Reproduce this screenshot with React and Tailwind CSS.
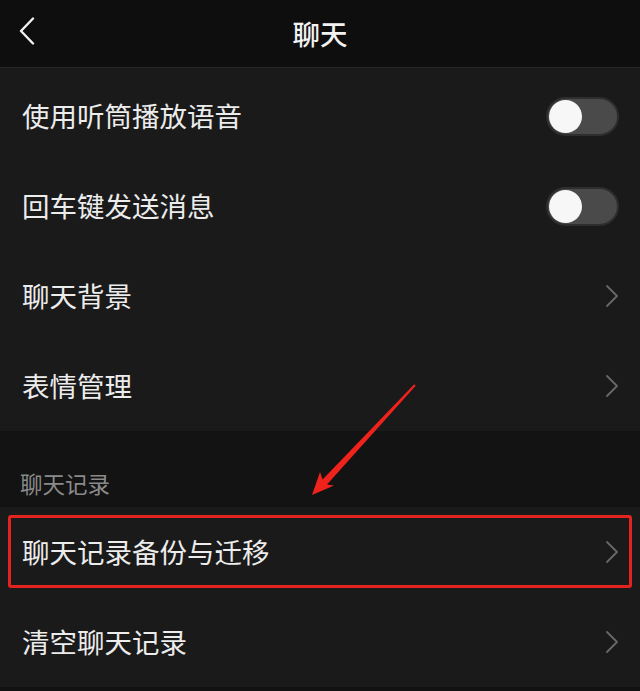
const FONT = { fontFamily: '"Noto Sans CJK SC", "Noto Sans", sans-serif' };

const Toggle = () => (
  <div className="w-[73px] h-[39px] rounded-full bg-[#4a4a4a] border-2 border-[#2e2e2e] flex items-center px-[1px]">
    <div className="w-[33px] h-[33px] rounded-full bg-[#f7f7f7]" />
  </div>
);

const Chevron = () => (
  <svg width="14" height="24" viewBox="0 0 14 24" fill="none">
    <path d="M2 2 L12 12 L2 22" stroke="#686868" strokeWidth="1.8" strokeLinecap="round" strokeLinejoin="round" />
  </svg>
);

const Row = ({ label, right }) => (
  <div className="h-[90px] flex items-center justify-between pl-[22px] pr-[21px] bg-[#1a1a1a]">
    <span className="text-[27.5px] leading-none text-[#ececec]">{label}</span>
    {right === 'toggle' ? <Toggle /> : <Chevron />}
  </div>
);

export default function App() {
  return (
    <div className="relative w-[640px] h-[691px] overflow-hidden bg-[#1a1a1a]" style={FONT}>
      <header className="h-[68px] bg-[#0e0e0e] border-b border-[#262626] flex items-center relative">
        <svg className="absolute left-[18px] top-[17px]" width="18" height="28" viewBox="0 0 18 28" fill="none">
          <path d="M15 1.5 L3 14 L15 26.5" stroke="#f2f2f2" strokeWidth="2.4" strokeLinecap="round" strokeLinejoin="round" />
        </svg>
        <h1 className="w-full text-center text-[27.5px] leading-none text-[#f2f2f2] font-medium">聊天</h1>
      </header>

      <div className="pt-[3px] bg-[#1a1a1a]">
        <Row label="使用听筒播放语音" right="toggle" />
        <Row label="回车键发送消息" right="toggle" />
        <Row label="聊天背景" />
        <Row label="表情管理" />
      </div>

      <div className="h-[76px] bg-[#131313] flex items-end pl-[20px] pb-[13px]">
        <span className="text-[22.5px] leading-none text-[#8a8a8a]">聊天记录</span>
      </div>

      <div>
        <Row label="聊天记录备份与迁移" />
        <Row label="清空聊天记录" />
      </div>
      <div className="h-[4px] bg-[#121212]" />

      {/* annotation overlay */}
      <div className="absolute left-[8px] top-[515px] w-[624px] h-[73px] border-[3px] border-[#e3231f] rounded-[3px]" />
      <svg className="absolute left-0 top-0" width="640" height="691" viewBox="0 0 640 691">
        <polygon
          points="312,495 320,472 322.6,479.4 414.3,384.3 415.7,385.7 327,484.4 334,485.5"
          fill="#f0221c"
        />
      </svg>
    </div>
  );
}
